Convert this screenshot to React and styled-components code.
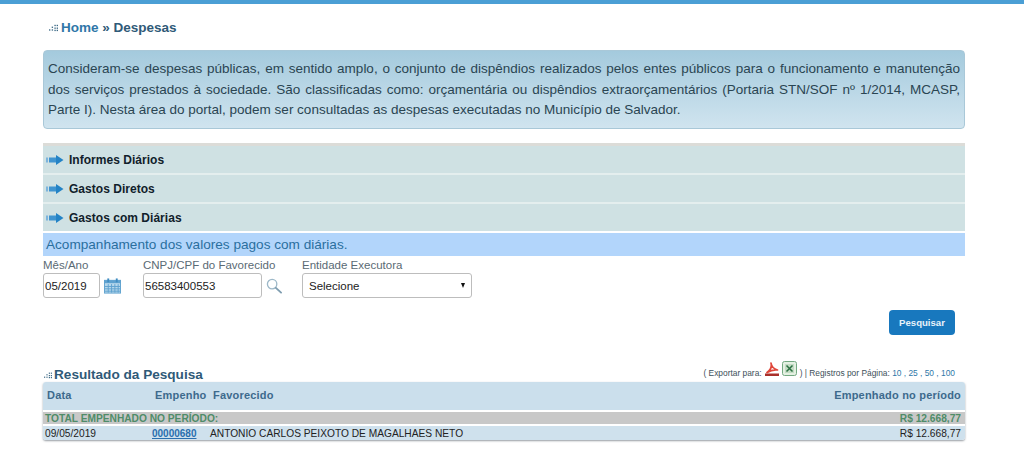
import React from 'react';
import styled, { createGlobalStyle } from 'styled-components';

const GlobalStyle = createGlobalStyle`
  html, body {
    margin: 0;
    background: #fff;
    font-family: "Liberation Sans", Arial, sans-serif;
  }
`;

function Dots({ size = 10 }) {
  return (
    <svg width={ size } height={ size } viewBox="0 0 10 10" fill="#3d6a86">
      <rect x="0" y="7" width="1.5" height="1.5" />
      <rect x="3" y="4" width="1.5" height="1.5" />
      <rect x="3" y="7" width="1.5" height="1.5" />
      <rect x="6" y="2" width="1.5" height="1.5" />
      <rect x="6" y="5" width="1.5" height="1.5" />
      <rect x="6" y="7.5" width="1.5" height="1.5" />
      <rect x="8.5" y="2" width="1.5" height="1.5" />
      <rect x="8.5" y="5" width="1.5" height="1.5" />
      <rect x="8.5" y="7.5" width="1.5" height="1.5" />
    </svg>
  );
}

function ArrowIcon() {
  return (
    <svg width="18" height="10" viewBox="0 0 18 10">
      <rect x="0" y="2.5" width="2" height="5" fill="#7db4dc" />
      <rect x="3" y="2.5" width="7" height="5" fill="#3f94d0" />
      <path d="M10 0 L17.5 5 L10 10 Z" fill="#2383c6" />
    </svg>
  );
}

function CalendarIcon() {
  return (
    <svg width="17" height="16" viewBox="0 0 18 16">
      <rect x="0.5" y="2" width="17" height="13.5" fill="#b7d8ec" stroke="#5fa2cf" />
      <rect x="0" y="2" width="18" height="3" fill="#5fa2cf" />
      <rect x="3.5" y="0" width="2" height="4" fill="#3f8cc2" />
      <rect x="12.5" y="0" width="2" height="4" fill="#3f8cc2" />
      <path
        d="M4.5 6v9M8 6v9M11.5 6v9M15 6v9M1 8.5h16M1 11h16M1 13.5h16"
        stroke="#5fa2cf"
        strokeWidth="1"
      />
    </svg>
  );
}

function SearchIcon() {
  return (
    <svg width="16" height="16" viewBox="0 0 17 17" fill="none">
      <circle cx="6.5" cy="6.5" r="5" stroke="#9db8c8" strokeWidth="1.4" />
      <path d="M10.5 10.5 L16 15.5" stroke="#7f9db0" strokeWidth="2" strokeLinecap="round" />
    </svg>
  );
}

function PdfIcon() {
  return (
    <svg width="14" height="14" viewBox="0 0 14 14" fill="none">
      <path
        d="M2 10.5 C5 8.5 7 5 6 1 M6 1 C6.5 4.5 9 7 12.5 8 M12.5 8 C9 7.5 5.5 8.5 2 10.5"
        stroke="#e0463a"
        strokeWidth="1.7"
        strokeLinecap="round"
      />
      <rect x="0" y="11.5" width="14" height="2.5" fill="#a92f2a" />
    </svg>
  );
}

function ExcelIcon() {
  return (
    <svg width="15" height="15" viewBox="0 0 15 15">
      <rect x="0.5" y="0.5" width="14" height="14" rx="2" fill="#e4f0e2" stroke="#74a981" />
      <rect x="3" y="3" width="9" height="9" fill="#c4dcc4" />
      <path d="M4.5 4.5 L10.5 10.5 M10.5 4.5 L4.5 10.5" stroke="#2a7040" strokeWidth="1.5" />
    </svg>
  );
}

const accordionItems = ['Informes Diários', 'Gastos Diretos', 'Gastos com Diárias'];
const pageSizes = ['10', '25', '50', '100'];

function App() {
  return (
    <>
      <GlobalStyle />
      <Page>
        <TopBar />
        <Content>
          <Breadcrumb>
            <Dots size={ 9 } />
            <span>
              <HomeLink>Home</HomeLink>
              {' » Despesas'}
            </span>
          </Breadcrumb>
          <InfoBox>
            Consideram-se despesas públicas, em sentido amplo, o conjunto de dispêndios
            realizados pelos entes públicos para o funcionamento e manutenção dos serviços
            prestados à sociedade. São classificadas como: orçamentária ou dispêndios
            extraorçamentários (Portaria STN/SOF nº 1/2014, MCASP, Parte I). Nesta área do
            portal, podem ser consultadas as despesas executadas no Município de Salvador.
          </InfoBox>
          <Divider />
          <Accordion>
            {accordionItems.map((item) => (
              <AccordionRow key={ item }>
                <ArrowIcon />
                <span>{item}</span>
              </AccordionRow>
            ))}
          </Accordion>
          <Notice>Acompanhamento dos valores pagos com diárias.</Notice>
          <SearchForm>
            <Field width="80px">
              <FieldLabel>Mês/Ano</FieldLabel>
              <FieldControl>
                <TextInput width="57px" defaultValue="05/2019" />
                <CalendarIcon />
              </FieldControl>
            </Field>
            <Field width="139px">
              <FieldLabel>CNPJ/CPF do Favorecido</FieldLabel>
              <FieldControl>
                <TextInput width="119px" defaultValue="56583400553" />
                <SearchIcon />
              </FieldControl>
            </Field>
            <Field width="170px">
              <FieldLabel>Entidade Executora</FieldLabel>
              <SelectBox>
                <span>Selecione</span>
                <Caret />
              </SelectBox>
            </Field>
          </SearchForm>
          <Actions>
            <SearchButton>Pesquisar</SearchButton>
          </Actions>
          <ResultHeader>
            <ResultTitle>
              <Dots size={ 8 } />
              <span>Resultado da Pesquisa</span>
            </ResultTitle>
            <ExportBar>
              <span>( Exportar para:</span>
              <ExportIcon>
                <PdfIcon />
              </ExportIcon>
              <ExportIcon>
                <ExcelIcon />
              </ExportIcon>
              <span>
                {') | Registros por Página: '}
                <PageSizes>{pageSizes.join(' , ')}</PageSizes>
              </span>
            </ExportBar>
          </ResultHeader>
          <ResultTable>
            <HeaderRow>
              <span>Data</span>
              <span>Empenho</span>
              <span>Favorecido</span>
              <span>Empenhado no período</span>
            </HeaderRow>
            <TotalRow>
              <span>TOTAL EMPENHADO NO PERÍODO:</span>
              <span>R$ 12.668,77</span>
            </TotalRow>
            <DataRow>
              <span>09/05/2019</span>
              <EmpenhoLink>00000680</EmpenhoLink>
              <span>ANTONIO CARLOS PEIXOTO DE MAGALHAES NETO</span>
              <span>R$ 12.668,77</span>
            </DataRow>
          </ResultTable>
        </Content>
      </Page>
    </>
  );
}

const Page = styled.div`
  width: 1024px;
  height: 455px;
  overflow: hidden;
  background: #fff;
`;

const TopBar = styled.div`
  height: 4px;
  background: #4b9fd5;
`;

const Content = styled.div`
  width: 922px;
  margin-left: 43px;
`;

const Breadcrumb = styled.div`
  display: flex;
  align-items: center;
  gap: 3px;
  height: 46px;
  padding: 1px 0 0 6px;
  box-sizing: border-box;
  font-size: 13.5px;
  font-weight: 700;
  color: #2f5a78;
`;

const HomeLink = styled.span`
  color: #2f77a8;
`;

const InfoBox = styled.div`
  box-sizing: border-box;
  height: 79px;
  padding: 8px 4px 0;
  border: 1px solid #a9c8d8;
  border-radius: 4px;
  background: linear-gradient(#a4cadd, #d0e4ef);
  font-size: 13.5px;
  line-height: 20.5px;
  text-align: justify;
  color: #2a4552;
`;

const Divider = styled.div`
  height: 3px;
  margin-top: 14px;
  background: #dcdcd8;
`;

const Accordion = styled.div`
  display: flex;
  flex-direction: column;
  gap: 2px;
  background: #e4eeee;
`;

const AccordionRow = styled.div`
  display: flex;
  align-items: center;
  gap: 5px;
  height: 27px;
  padding-left: 3px;
  background: #cfe1e3;
  font-size: 12px;
  font-weight: 700;
  letter-spacing: 0.03px;
  color: #10202a;
`;

const Notice = styled.div`
  height: 23px;
  margin-top: 2px;
  padding-left: 3px;
  background: #b2d5fb;
  font-size: 13.6px;
  line-height: 23px;
  color: #2a6f9e;
`;

const SearchForm = styled.div`
  display: flex;
  gap: 20px;
  margin-top: 2px;
`;

const Field = styled.div`
  display: flex;
  flex-direction: column;
  width: ${(props) => props.width};
`;

const FieldLabel = styled.div`
  height: 15px;
  font-size: 11.5px;
  line-height: 15px;
  white-space: nowrap;
  color: #5a6a74;
`;

const FieldControl = styled.div`
  display: flex;
  align-items: center;
  gap: 4px;
`;

const TextInput = styled.input`
  box-sizing: border-box;
  width: ${(props) => props.width};
  height: 25px;
  padding: 0 1px;
  border: 1px solid #bdbdbd;
  border-radius: 3px;
  background: #fff;
  font-family: inherit;
  font-size: 11.5px;
  color: #222;
`;

const SelectBox = styled.div`
  display: flex;
  align-items: center;
  justify-content: space-between;
  box-sizing: border-box;
  width: 170px;
  height: 25px;
  padding: 0 6px;
  border: 1px solid #bdbdbd;
  border-radius: 3px;
  font-size: 11.5px;
  color: #222;
`;

const Caret = styled.div`
  width: 0;
  height: 0;
  border-left: 2.5px solid transparent;
  border-right: 2.5px solid transparent;
  border-top: 5px solid #111;
`;

const Actions = styled.div`
  display: flex;
  justify-content: flex-end;
  padding: 12px 10px 0 0;
`;

const SearchButton = styled.button`
  width: 66px;
  height: 25px;
  padding: 0;
  border: 0;
  border-radius: 4px;
  background: #1878be;
  font-family: inherit;
  font-size: 9.6px;
  font-weight: 700;
  color: #e8f2f9;
`;

const ResultHeader = styled.div`
  display: flex;
  align-items: flex-end;
  justify-content: space-between;
  height: 47px;
  padding: 0 10px 0 1px;
`;

const ResultTitle = styled.div`
  display: flex;
  align-items: center;
  gap: 2px;
  font-size: 13.6px;
  font-weight: 700;
  color: #2f5a78;
`;

const ExportBar = styled.div`
  display: flex;
  align-items: flex-end;
  gap: 3px;
  padding-bottom: 4px;
  font-size: 8.4px;
  color: #40505a;
`;

const ExportIcon = styled.div`
  display: flex;
  margin-bottom: 2px;
`;

const PageSizes = styled.span`
  color: #2f77a8;
`;

const ResultTable = styled.div`
  display: flex;
  flex-direction: column;
  gap: 2px;
  border-radius: 3px;
  overflow: hidden;
  box-shadow: 0 1px 2px rgba(80, 90, 100, 0.6);
`;

const HeaderRow = styled.div`
  display: grid;
  grid-template-columns: 108px 58px 1fr auto;
  align-items: center;
  box-sizing: border-box;
  height: 28px;
  padding: 0 4px 2px;
  background: #cbdfec;
  font-size: 11px;
  font-weight: 700;
  letter-spacing: 0.2px;
  color: #3d6a8c;
`;

const TotalRow = styled.div`
  display: flex;
  justify-content: space-between;
  align-items: center;
  height: 12px;
  padding: 0 4px 0 2px;
  background: #c8c8c8;
  font-size: 10.2px;
  font-weight: 700;
  color: #4f8c68;
`;

const DataRow = styled.div`
  display: grid;
  grid-template-columns: 107px 58px 1fr auto;
  align-items: center;
  height: 14px;
  padding: 0 4px 0 2px;
  background: #cfe1ed;
  font-size: 10.2px;
  color: #222;
`;

const EmpenhoLink = styled.a`
  font-size: 10px;
  font-weight: 700;
  color: #2a6fae;
  text-decoration: underline;
`;

export default App;
